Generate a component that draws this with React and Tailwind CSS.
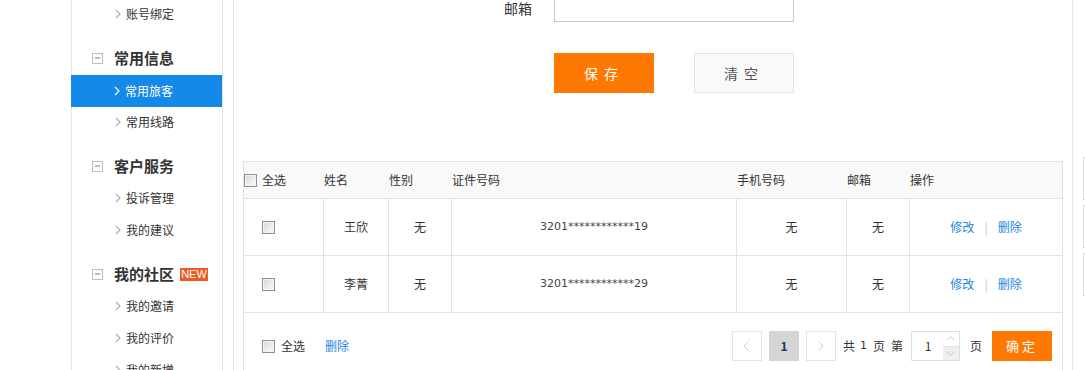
import React from 'react';

const CJK = "font-['Noto_Sans_CJK_SC','Noto_Sans',sans-serif]";

function Check() {
  return (
    <span className="inline-block h-[13px] w-[13px] shrink-0 border border-[#8e8f8f] bg-linear-to-br from-[#d6d6d6] to-[#fdfdfd] shadow-[inset_0_0_0_1px_#f4f4f4]" />
  );
}

function Chevron({ white }) {
  return (
    <svg width="6" height="10" viewBox="0 0 6 10" className="shrink-0">
      <polyline points="1,1 5,5 1,9" fill="none" stroke={white ? '#ffffff' : '#a3a9b3'} strokeWidth="1.1" />
    </svg>
  );
}

function MinusBox() {
  return (
    <span className="flex h-[11px] w-[11px] items-center justify-center border border-[#bdbdbd]">
      <span className="h-[2px] w-[5px] bg-[#bdbdbd]" />
    </span>
  );
}

function Item({ label, active }) {
  return (
    <div
      className={[
        'flex h-8 items-center pl-[43px] text-[12px]',
        active ? '-ml-px mt-px -mb-px bg-[#1589e8] text-white' : 'text-[#333]',
      ].join(' ')}
    >
      <Chevron white={active} />
      <span className="ml-[5px]">{label}</span>
    </div>
  );
}

function Section({ title, badge, items }) {
  return (
    <div className="pt-3">
      <div className="flex h-8 items-center pl-5">
        <MinusBox />
        <span className="ml-[11px] text-[15px] font-bold text-[#333]">{title}</span>
        {badge && (
          <span className="ml-[6px] flex h-[13px] w-[28px] items-center justify-center bg-[#ee5a24] font-['Liberation_Sans',sans-serif] text-[11px] leading-none text-white">
            NEW
          </span>
        )}
      </div>
      {items.map((it) => (
        <Item key={it.label} {...it} />
      ))}
    </div>
  );
}

const sections = [
  { title: '常用信息', items: [{ label: '常用旅客', active: true }, { label: '常用线路' }] },
  { title: '客户服务', items: [{ label: '投诉管理' }, { label: '我的建议' }] },
  { title: '我的社区', badge: true, items: [{ label: '我的邀请' }, { label: '我的评价' }, { label: '我的新增' }] },
];

const rows = [
  { name: '王欣', sex: '无', id: '3201************19', phone: '无', mail: '无' },
  { name: '李菁', sex: '无', id: '3201************29', phone: '无', mail: '无' },
];

const cols = 'grid grid-cols-[80px_65px_63px_285px_110px_63px_152px]';

function Table() {
  return (
    <div className="mt-[68px] h-[220px] w-[820px] border border-[#e2e2e2] border-b-0 text-[12px] text-[#333]">
      <div className={`${cols} h-[37px] items-center border-b border-[#e2e2e2] bg-[#f9f9f9]`}>
        <div className="flex items-center">
          <Check />
          <span className="ml-[5px]">全选</span>
        </div>
        <div>姓名</div>
        <div>性别</div>
        <div>证件号码</div>
        <div>手机号码</div>
        <div>邮箱</div>
        <div>操作</div>
      </div>
      {rows.map((r) => (
        <div key={r.name} className={`${cols} h-[57px] border-b border-[#e2e2e2]`}>
          <div className="flex items-center border-r border-[#e2e2e2] pl-[18px]">
            <Check />
          </div>
          <div className="flex items-center justify-center border-r border-[#e2e2e2]">{r.name}</div>
          <div className="flex items-center justify-center border-r border-[#e2e2e2]">{r.sex}</div>
          <div className="flex items-center justify-center border-r border-[#e2e2e2] font-['DejaVu_Sans',sans-serif] text-[11px] text-[#444]">
            {r.id}
          </div>
          <div className="flex items-center justify-center border-r border-[#e2e2e2]">{r.phone}</div>
          <div className="flex items-center justify-center border-r border-[#e2e2e2]">{r.mail}</div>
          <div className="flex items-center justify-center text-[#1a88e0]">
            <span>修改</span>
            <span className="mx-[10px] text-[#a8cfee]">|</span>
            <span>删除</span>
          </div>
        </div>
      ))}
      <div className="flex items-start justify-between pl-[18px] pr-[10px] pt-[18px]">
        <div className="mt-[6px] flex items-center">
          <Check />
          <span className="ml-[6px]">全选</span>
          <span className="ml-5 text-[#1a88e0]">删除</span>
        </div>
        <div className="flex items-center">
          <span className="flex h-[30px] w-[30px] items-center justify-center border border-[#e3e3e3]">
            <svg width="7" height="12" viewBox="0 0 7 12">
              <polyline points="6,1 1,6 6,11" fill="none" stroke="#cfcfcf" strokeWidth="1" />
            </svg>
          </span>
          <span className="ml-[7px] flex h-[30px] w-[30px] items-center justify-center bg-[#d5d5d5] font-bold text-[#2a3350]">
            1
          </span>
          <span className="ml-[7px] flex h-[30px] w-[30px] items-center justify-center border border-[#e3e3e3]">
            <svg width="7" height="12" viewBox="0 0 7 12">
              <polyline points="1,1 6,6 1,11" fill="none" stroke="#cfcfcf" strokeWidth="1" />
            </svg>
          </span>
          <span className="ml-[7px]">共</span>
          <span className="ml-[5px] font-['DejaVu_Sans',sans-serif] text-[11px]">1</span>
          <span className="ml-[6px]">页</span>
          <span className="ml-[6px]">第</span>
          <div className="ml-[8px] flex h-[30px] w-[49px] border border-[#e0e0e0]">
            <span className="flex flex-1 items-center justify-center pl-[1px]">1</span>
            <div className="flex w-[16px] flex-col">
              <span className="flex flex-1 items-center justify-center">
                <svg width="9" height="5" viewBox="0 0 9 5">
                  <polyline points="0.5,4.5 4.5,0.5 8.5,4.5" fill="none" stroke="#c8c8c8" strokeWidth="1" />
                </svg>
              </span>
              <span className="flex flex-1 items-center justify-center border-t border-[#e4e4e4] bg-[#efefef]">
                <svg width="9" height="5" viewBox="0 0 9 5">
                  <polyline points="0.5,0.5 4.5,4.5 8.5,0.5" fill="none" stroke="#c8c8c8" strokeWidth="1" />
                </svg>
              </span>
            </div>
          </div>
          <span className="ml-[10px]">页</span>
          <span className="ml-[10px] flex h-[30px] w-[60px] items-center justify-center bg-[#ff7800] text-[13px] tracking-[3px] text-white">
            确定
          </span>
        </div>
      </div>
    </div>
  );
}

export default function App() {
  return (
    <div className={`${CJK} flex h-[370px] w-[1085px] overflow-hidden bg-white`}>
      <aside className="ml-[71px] h-full w-[152px] shrink-0 border-x border-[#e4e4e4]">
        <div className="-mt-[2px]">
          <Item label="账号绑定" />
          {sections.map((s) => (
            <Section key={s.title} {...s} />
          ))}
        </div>
      </aside>
      <main className="ml-[10px] h-full w-[840px] shrink-0 border-x border-[#e4e4e4] px-[9px]">
        <div className="-mt-[8px] flex items-center">
          <span className="w-[289px] pt-[3px] text-right text-[14px] text-[#333]">邮箱</span>
          <span className="ml-[22px] h-[30px] w-[240px] border border-[#c9c9c9]" />
        </div>
        <div className="ml-[311px] mt-[31px] flex gap-[40px]">
          <button type="button" className="h-10 w-[100px] bg-[#ff7800] text-[14px] tracking-[6px] text-white">
            保存
          </button>
          <button
            type="button"
            className="h-10 w-[100px] border border-[#e3e3e3] bg-[#f9f9f9] text-[14px] tracking-[6px] text-[#555]"
          >
            清空
          </button>
        </div>
        <Table />
      </main>
      <div className="ml-[10px] flex flex-col gap-[5px] pt-[157px]">
        <span className="h-[43px] w-[40px] border border-[#dcdcdc]" />
        <span className="h-[43px] w-[40px] border border-[#dcdcdc]" />
        <span className="h-[43px] w-[40px] border border-[#dcdcdc]" />
      </div>
    </div>
  );
}
